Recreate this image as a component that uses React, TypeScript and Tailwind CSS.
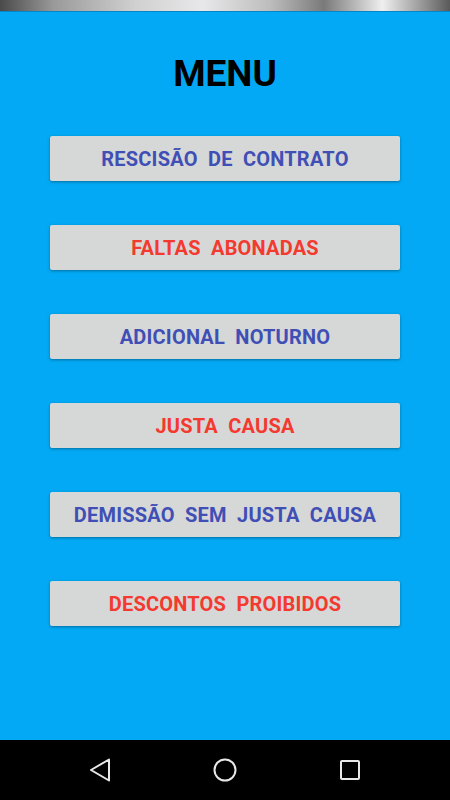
const items = [
  { label: "RESCISÃO  DE  CONTRATO", color: "text-[#3F4FB5]" },
  { label: "FALTAS  ABONADAS", color: "text-[#F4392F]" },
  { label: "ADICIONAL  NOTURNO", color: "text-[#3F4FB5]" },
  { label: "JUSTA  CAUSA", color: "text-[#F4392F]" },
  { label: "DEMISSÃO  SEM  JUSTA  CAUSA", color: "text-[#3F4FB5]" },
  { label: "DESCONTOS  PROIBIDOS", color: "text-[#F4392F]" },
];

export default function App() {
  return (
    <div className="flex h-[800px] w-[450px] flex-col bg-[#03A9F4]" style={{ fontFamily: "Roboto, sans-serif" }}>
      {/* status bar */}
      <div className="h-[12px] w-full bg-[linear-gradient(90deg,#4a4a4a_0%,#9a9a9a_12%,#d0d0d0_30%,#e8e8ea_45%,#bdbdbd_60%,#7a7a7a_72%,#efeff0_85%,#5a5a5a_100%)] border-b border-[#0288c8]" />

      <div className="flex flex-1 flex-col items-center">
        <h1 className="mt-[40px] text-[37px] font-bold leading-[44px] text-black">MENU</h1>

        <div className="mt-[40px] flex flex-col gap-[44px]">
          {items.map((item) => (
            <button
              key={item.label}
              className={`h-[45px] w-[350px] rounded-[2px] bg-[#D6D7D7] text-[20px] font-bold tracking-[0.2px] whitespace-pre shadow-[0_1px_3px_rgba(0,0,0,0.35)] ${item.color}`}
            >
              {item.label}
            </button>
          ))}
        </div>
      </div>

      {/* nav bar */}
      <div className="flex h-[60px] items-center justify-between bg-black px-[89px]">
        <svg width="22" height="24" viewBox="0 0 22 24" fill="none" stroke="#e8e8e8" strokeWidth="2" strokeLinejoin="round">
          <path d="M20 1.5 L2 12 L20 22.5 Z" />
        </svg>
        <svg width="24" height="24" viewBox="0 0 24 24" fill="none" stroke="#e8e8e8" strokeWidth="2">
          <circle cx="12" cy="12" r="10.5" />
        </svg>
        <svg width="22" height="22" viewBox="0 0 22 22" fill="none" stroke="#e8e8e8" strokeWidth="2">
          <rect x="2" y="2" width="18" height="18" rx="1" />
        </svg>
      </div>
    </div>
  );
}
